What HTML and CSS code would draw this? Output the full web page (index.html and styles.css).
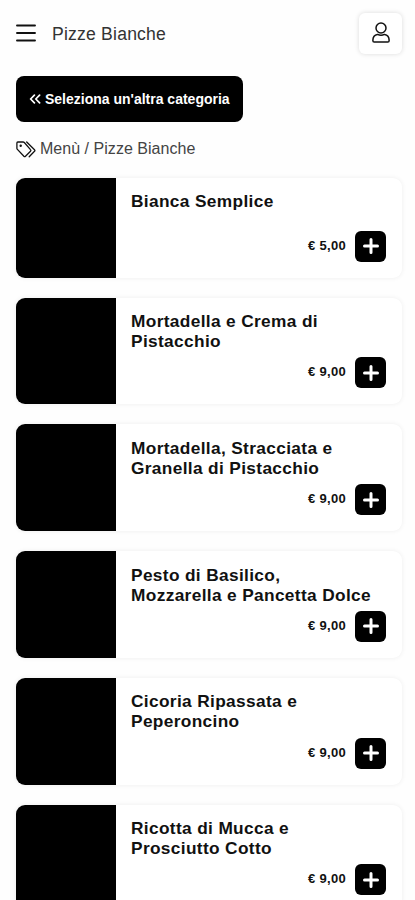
FILE: index.html
```html
<!DOCTYPE html>
<html lang="it">
<head>
<meta charset="utf-8">
<meta name="viewport" content="width=device-width, initial-scale=1">
<title>Pizze Bianche</title>
<link rel="stylesheet" href="styles.css">
</head>
<body>
<svg class="defs" aria-hidden="true"><symbol id="plus" viewBox="0 0 16 16"><path d="M8 1.500v13M1.500 8h13" fill="none" stroke="currentColor" stroke-width="3" stroke-linecap="round"/></symbol></svg>
<header class="header">
  <svg class="burger" viewBox="0 0 20 18"><path d="M1 1.500h18M1 9h18M1 16.500h18" fill="none" stroke="currentColor" stroke-width="1.900" stroke-linecap="round"/></svg>
  <h1 class="heading">Pizze Bianche</h1>
  <button class="account" aria-label="Account"><svg viewBox="0 0 18 21" width="18" height="21"><g fill="none" stroke="currentColor" stroke-width="1.500" stroke-linejoin="round"><circle cx="9" cy="6" r="5"/><path d="M5.500 12.400C2.500 13 .9 15.200.9 18v.8c0 .8.5 1.300 1.300 1.300h13.600c.8 0 1.300-.5 1.300-1.300V18c0-2.800-1.600-5-4.600-5.600-1.200.6-2.300.9-3.500.9s-2.300-.3-3.500-.9z"/></g></svg></button>
</header>
<main>
  <a class="back"><svg viewBox="0 0 12 10" width="12" height="10"><path d="M5.400 1.200 1.600 5l3.800 3.800M10.600 1.200 6.800 5l3.800 3.800" fill="none" stroke="currentColor" stroke-width="1.700" stroke-linecap="round" stroke-linejoin="round"/></svg><span>Seleziona un'altra categoria</span></a>
  <nav class="crumbs"><svg viewBox="0 0 20 17" width="20" height="17"><g fill="none" stroke="currentColor" stroke-width="1.300" stroke-linejoin="round" stroke-linecap="round"><path d="M.9 1.900v5.300c0 .5.2.9.5 1.200l6.500 6.900c.5.5 1.100.5 1.600 0l5-5.100c.5-.5.5-1.100 0-1.600L8.300 1.500C8 1.200 7.600 1 7.100 1H1.800c-.5 0-.9.4-.9.9z"/><path d="m10.700 1 7.800 7.700c.5.5.5 1.100 0 1.600l-5.300 5.500"/></g><circle cx="4.700" cy="4.700" r="1.200" fill="currentColor"/></svg><span>Menù / Pizze Bianche</span></nav>
  <section class="menu">
    <article class="card"><div class="photo"></div><div class="info"><h2>Bianca Semplice</h2><div class="buy"><span>€ 5,00</span><button aria-label="Aggiungi"><svg><use href="#plus"/></svg></button></div></div></article>
    <article class="card"><div class="photo"></div><div class="info"><h2>Mortadella e Crema di Pistacchio</h2><div class="buy"><span>€ 9,00</span><button aria-label="Aggiungi"><svg><use href="#plus"/></svg></button></div></div></article>
    <article class="card"><div class="photo"></div><div class="info"><h2>Mortadella, Stracciata e Granella di Pistacchio</h2><div class="buy"><span>€ 9,00</span><button aria-label="Aggiungi"><svg><use href="#plus"/></svg></button></div></div></article>
    <article class="card"><div class="photo"></div><div class="info"><h2>Pesto di Basilico,<br>Mozzarella e Pancetta Dolce</h2><div class="buy"><span>€ 9,00</span><button aria-label="Aggiungi"><svg><use href="#plus"/></svg></button></div></div></article>
    <article class="card"><div class="photo"></div><div class="info"><h2>Cicoria Ripassata e<br>Peperoncino</h2><div class="buy"><span>€ 9,00</span><button aria-label="Aggiungi"><svg><use href="#plus"/></svg></button></div></div></article>
    <article class="card"><div class="photo"></div><div class="info"><h2>Ricotta di Mucca e<br>Prosciutto Cotto</h2><div class="buy"><span>€ 9,00</span><button aria-label="Aggiungi"><svg><use href="#plus"/></svg></button></div></div></article>
  </section>
</main>
</body>
</html>
```
FILE: styles.css
```css
* { box-sizing: border-box; }
body {
  margin: 0;
  height: 900px;
  overflow: hidden;
  padding: 12px 13px 0 16px;
  background: #fefefe;
  color: #111;
  font-family: "Liberation Sans", Arial, sans-serif;
}
svg { display: block; flex: none; }
h1, h2 { margin: 0; }
button { border: 0; padding: 0; font: inherit; }
.defs { display: none; }
.header { display: flex; align-items: center; height: 42px; }
.burger { width: 20px; height: 18px; }
.heading { margin: 2px 0 0 16px; font-size: 17.600px; line-height: 22px; font-weight: 400; letter-spacing: .2px; color: #333; }
.account {
  display: grid;
  place-items: center;
  width: 43px;
  height: 41px;
  margin-left: auto;
  border-radius: 6px;
  background: #fff;
  color: #111;
  box-shadow: 0 0 5px rgba(0, 0, 0, .14);
}
.account svg { margin-top: -2px; }
.back {
  display: flex;
  align-items: center;
  gap: 4px;
  width: 227px;
  height: 46px;
  margin-top: 22px;
  padding-left: 13px;
  border-radius: 8px;
  background: #000;
  color: #fff;
  font-size: 14px;
  font-weight: 700;
  white-space: nowrap;
}
.crumbs {
  display: flex;
  align-items: center;
  gap: 4px;
  height: 20px;
  margin-top: 17px;
  font-size: 16px;
  line-height: 20px;
  letter-spacing: .03px;
  color: #444;
}
.crumbs svg { color: #111; }
.menu { display: grid; gap: 20px; margin-top: 18.500px; }
.card {
  display: flex;
  width: 386px;
  height: 106.800px;
  border-radius: 9px;
  overflow: hidden;
  background: #fff;
  box-shadow: 0 0 5px rgba(0, 0, 0, .07);
}
.card:first-child { height: 100px; }
.photo { width: 100px; background: #000; }
.info {
  flex: 1;
  display: flex;
  flex-direction: column;
  justify-content: space-between;
  padding: 13.500px 16px 16px 15px;
}
h2 { font-size: 17.300px; line-height: 20px; letter-spacing: .35px; margin-right: -12px; }
.buy { display: flex; justify-content: flex-end; align-items: center; gap: 9px; font-size: 13px; font-weight: 700; letter-spacing: .3px; }
.buy span { margin-top: -2px; }
.buy button { display: grid; place-items: center; width: 31px; height: 31px; border-radius: 6px; background: #000; color: #fff; }
.buy svg { width: 16px; height: 16px; }
```
